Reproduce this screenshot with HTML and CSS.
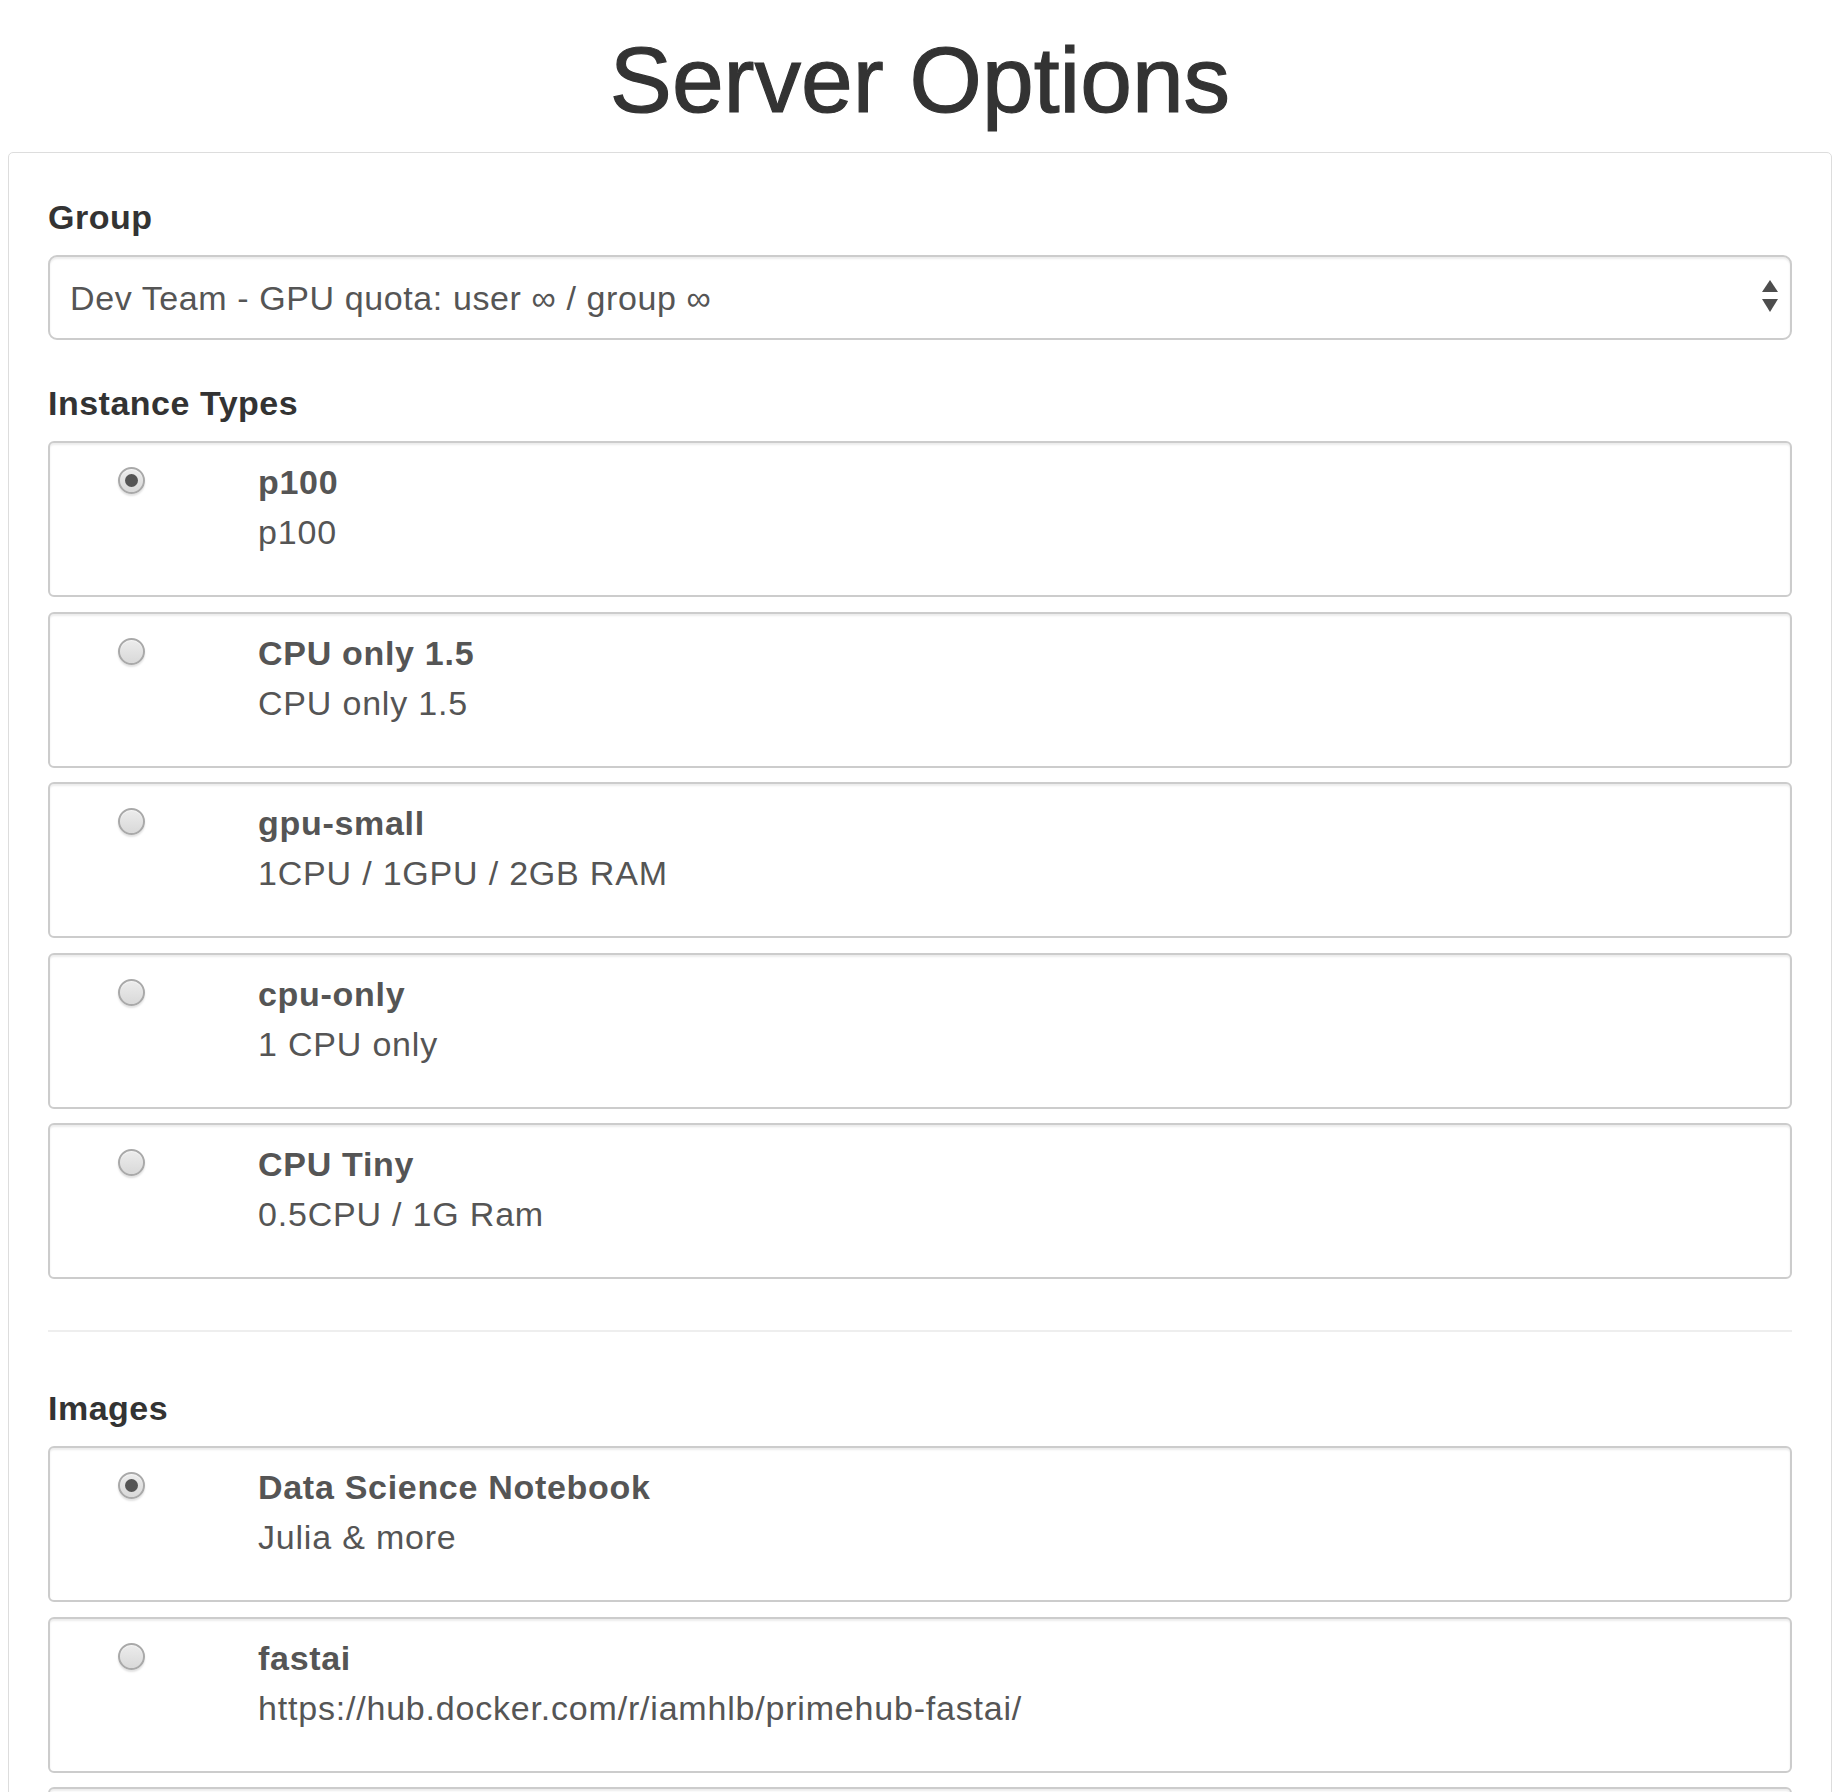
FILE: index.html
```html
<!DOCTYPE html>
<html lang="en">
<head>
<meta charset="utf-8">
<title>Server Options</title>
<link rel="stylesheet" href="styles.css">
</head>
<body>
<h1 class="page-title">Server Options</h1>
<form class="panel">
  <div class="form-group">
    <label class="group-label" for="group">Group</label>
    <div class="select-wrap">
      <select id="group" class="select">
        <option>Dev Team - GPU quota: user ∞ / group ∞</option>
      </select>
      <svg class="select-arrows" width="16" height="32" viewBox="0 0 16 32" aria-hidden="true">
        <polygon points="8,0 16,12 0,12" fill="#4d4d4d"/>
        <polygon points="0,19 16,19 8,32" fill="#4d4d4d"/>
      </svg>
    </div>
  </div>

  <div class="form-group">
    <div class="group-label">Instance Types</div>
    <div class="options">
      <label class="option">
        <input class="radio" type="radio" name="instance" checked>
        <span class="option-text"><span class="option-title">p100</span><span class="option-desc">p100</span></span>
      </label>
      <label class="option">
        <input class="radio" type="radio" name="instance">
        <span class="option-text"><span class="option-title">CPU only 1.5</span><span class="option-desc">CPU only 1.5</span></span>
      </label>
      <label class="option">
        <input class="radio" type="radio" name="instance">
        <span class="option-text"><span class="option-title">gpu-small</span><span class="option-desc">1CPU / 1GPU / 2GB RAM</span></span>
      </label>
      <label class="option">
        <input class="radio" type="radio" name="instance">
        <span class="option-text"><span class="option-title">cpu-only</span><span class="option-desc">1 CPU only</span></span>
      </label>
      <label class="option">
        <input class="radio" type="radio" name="instance">
        <span class="option-text"><span class="option-title">CPU Tiny</span><span class="option-desc">0.5CPU / 1G Ram</span></span>
      </label>
    </div>
  </div>

  <hr class="divider">

  <div class="form-group">
    <div class="group-label">Images</div>
    <div class="options">
      <label class="option">
        <input class="radio" type="radio" name="image" checked>
        <span class="option-text"><span class="option-title">Data Science Notebook</span><span class="option-desc">Julia &amp; more</span></span>
      </label>
      <label class="option">
        <input class="radio" type="radio" name="image">
        <span class="option-text"><span class="option-title">fastai</span><span class="option-desc">https://hub.docker.com/r/iamhlb/primehub-fastai/</span></span>
      </label>
      <label class="option">
        <input class="radio" type="radio" name="image">
        <span class="option-text"></span>
      </label>
    </div>
  </div>
</form>
</body>
</html>
```

FILE: styles.css
```css
html, body {
  background: #fff;
}
body {
  margin: 0;
  padding-left: 8px;
  font-family: "Liberation Sans", Arial, Helvetica, sans-serif;
  font-size: 34px;
  line-height: 50px;
  color: #333;
}
.page-title {
  margin: 29px 0 21px;
  font-size: 93px;
  line-height: 102px;
  font-weight: normal;
  text-align: center;
  color: #333;
  -webkit-text-stroke: 1.2px #333;
}
.panel {
  box-sizing: border-box;
  margin: 0;
  border: 1px solid #ddd;
  border-radius: 5px;
  padding: 39px 39px 40px;
  background: #fff;
}
.form-group {
  margin-bottom: 38px;
}
.form-group:last-child {
  margin-bottom: 0;
}
.group-label {
  display: block;
  margin-bottom: 13px;
  font-weight: bold;
  color: #333;
  letter-spacing: 0.5px;
}
.select-wrap {
  position: relative;
}
.select {
  display: block;
  box-sizing: border-box;
  width: 100%;
  height: 85px;
  margin: 0;
  padding: 0 60px 0 20px;
  border: 2px solid #ccc;
  border-radius: 9px;
  background: #fff;
  box-shadow: inset 0 2px 2px rgba(0, 0, 0, 0.075);
  font-family: inherit;
  font-size: 34px;
  letter-spacing: 0.6px;
  color: #555;
  -webkit-appearance: none;
  appearance: none;
  outline: none;
}
.select-arrows {
  position: absolute;
  right: 14px;
  top: 25px;
}
.options {
  display: flex;
  flex-direction: column;
  gap: 14.5px;
}
.option {
  box-sizing: border-box;
  height: 156px;
  display: grid;
  grid-template-columns: 208px 1fr;
  align-items: start;
  padding-top: 14px;
  border: 2px solid #ccc;
  border-radius: 6px;
  background: #fff;
  box-shadow: inset 0 2px 2px rgba(0, 0, 0, 0.075);
  color: #555;
  font-weight: normal;
}
.radio {
  -webkit-appearance: none;
  appearance: none;
  box-sizing: border-box;
  width: 27px;
  height: 27px;
  margin: 10px 0 0 68px;
  border: 2px solid #a9a9a9;
  border-radius: 50%;
  background: linear-gradient(#ececec, #d9d9d9);
  box-shadow: 0 2px 2px rgba(0, 0, 0, 0.12), inset 0 1px 1px rgba(255, 255, 255, 0.6);
  display: grid;
  place-items: center;
}
.radio:checked::after {
  content: "";
  width: 13px;
  height: 13px;
  border-radius: 50%;
  background: #555;
}
.option-text {
  display: flex;
  flex-direction: column;
}
.option-title {
  font-weight: bold;
  color: #555;
  letter-spacing: 0.7px;
}
.option-desc {
  color: #555;
  letter-spacing: 0.8px;
}
.divider {
  margin: 51px 0 51px;
  border: 0;
  border-top: 2px solid #eee;
  height: 0;
}
```
